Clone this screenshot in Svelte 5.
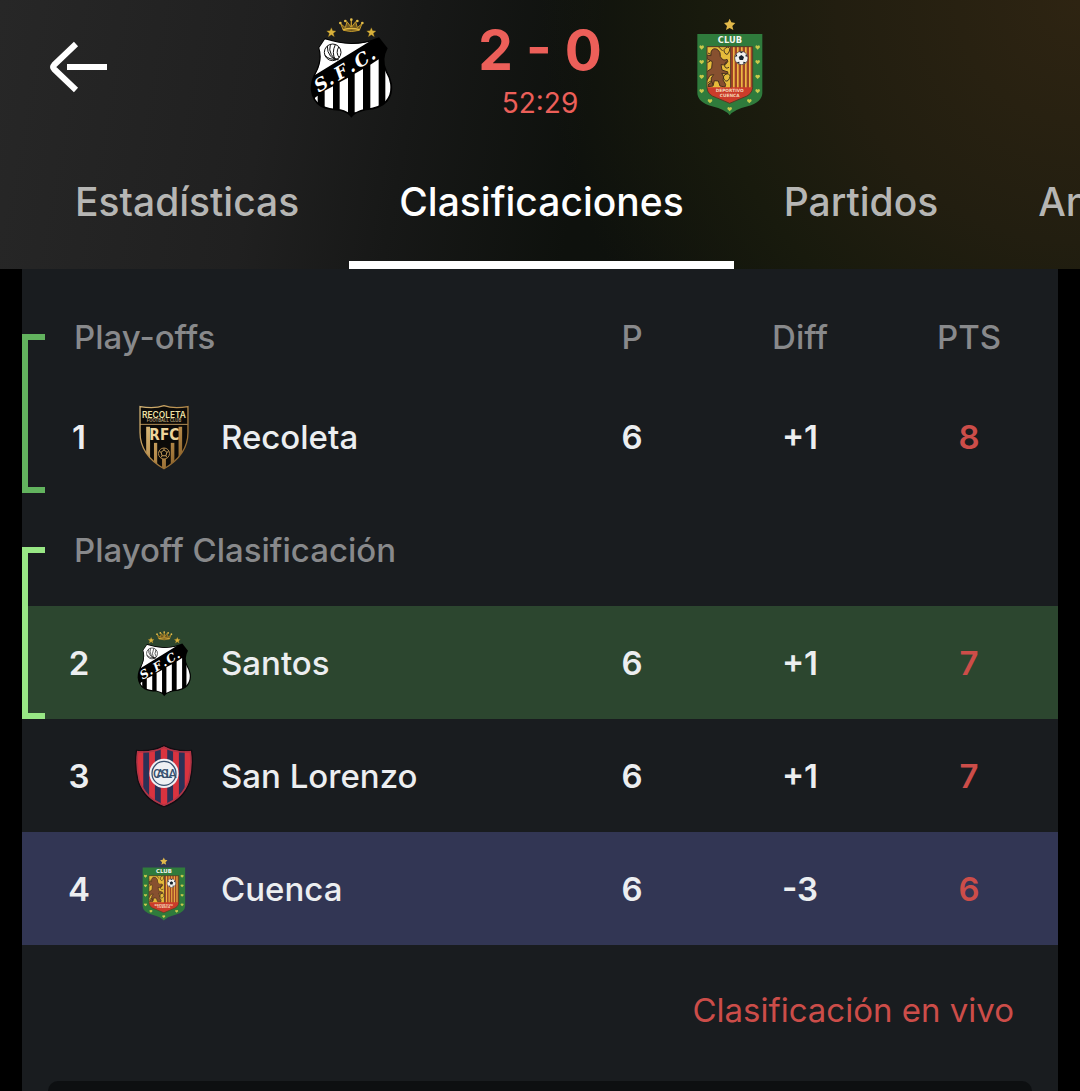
<script>
  const tabs = ['Estadísticas', 'Clasificaciones', 'Partidos', 'Análisis'];
  let active = $state('Clasificaciones');

  const groups = [
    {
      title: 'Play-offs',
      mark: 'direct',
      teams: [{ rank: 1, name: 'Recoleta', crest: 'recoleta', played: 6, diff: '+1', points: 8 }]
    },
    {
      title: 'Playoff Clasificación',
      mark: 'playoff',
      teams: [{ rank: 2, name: 'Santos', crest: 'santos', played: 6, diff: '+1', points: 7, tone: 'home' }]
    },
    {
      teams: [
        { rank: 3, name: 'San Lorenzo', crest: 'lorenzo', played: 6, diff: '+1', points: 7 },
        { rank: 4, name: 'Cuenca', crest: 'cuenca', played: 6, diff: '-3', points: 6, tone: 'away' }
      ]
    }
  ];

  const hearts = [
    [93, 141], [93, 185], [93, 229], [93, 272], [118, 302], [177, 326],
    [236, 302], [261, 272], [261, 229], [261, 185], [261, 141]
  ];
</script>

{#snippet santos(uid)}
  <svg class="crest" viewBox="26 43 312 312" role="img" aria-label="Santos">
    <clipPath id="{uid}-body">
      <path d="M104 116 87 141Q98 175 80 212Q65 238 66 264Q68 298 94 314Q115 324 150 326Q174 331 183 345Q194 331 225 324Q268 320 286 300Q303 280 300 252Q297 232 285 212Q270 176 288 144L265 116Q225 130 183 130Q140 128 104 116Z" />
    </clipPath>
    <g fill="#d9b23c" stroke="#8d6c1c" stroke-width="1">
      <path d="m123 81 4 9 10 1-8 7 3 10-9-6-9 6 3-10-8-7 10-1zM243 81l4 9 10 1-8 7 3 10-9-6-9 6 3-10-8-7 10-1z" />
    </g>
    <path d="m151 69 8 20q24 7 48 0l8-20-14 12-5-18-12 16-1-20-1 20-12-16-5 18z" fill="#6d561f" stroke="#c59a2c" stroke-width="3" stroke-linejoin="round" />
    <g fill="#e3bd4a">
      <circle cx="150" cy="67" r="4" /><circle cx="165" cy="61" r="4" /><circle cx="183" cy="57" r="4" /><circle cx="201" cy="61" r="4" /><circle cx="216" cy="67" r="4" />
    </g>
    <path d="M158 87q25-7 50 0" fill="none" stroke="#e0b640" stroke-width="4" />
    <path d="M104 112 84 141Q94 172 78 208Q60 238 61 265Q64 302 92 319Q112 329 148 330Q172 335 183 351Q195 335 227 329Q272 325 291 303Q309 282 305 250Q301 230 289 209Q274 176 292 143L266 110Q225 127 183 127Q140 125 104 112Z" fill="#000" />
    <g clip-path="url(#{uid}-body)">
      <path d="M104 110Q140 129 185 129Q215 130 240 121L74 223Q99 175 84 141Z" fill="#fff" />
      <path d="M74 291 82 285V330H74zM103 270 128 257V330H103zM148 245 173 231V335H148zM193 219 218 205V335H193zM240 192 265 176V330H240zM285 205 306 205V305H285z" fill="#fff" />
    </g>
    <g fill="none" stroke="#111" stroke-width="3">
      <circle cx="127" cy="155" r="25" fill="#fff" />
      <path d="M111 136q-1 18 10 31t25 8M120 132q-5 16 3 30t20 16M135 132q-12 25 0 45M145 139q-10 18 2 32M104 164q12 14 36 12" />
    </g>
    <text x="0 40 70 114 140 186" transform="translate(85 276) rotate(-31)" fill="#fff" font-family="DejaVu Serif, serif" font-weight="700" font-style="italic" font-size="54">S.F.C.</text>
  </svg>
{/snippet}

{#snippet cuenca(uid)}
  <svg class="crest" viewBox="22 44 312 312" role="img" aria-label="Cuenca">
    <clipPath id="{uid}-inner">
      <path d="M109 139H246V262Q244 284 217 292L177 309 137 292Q110 284 109 262Z" />
    </clipPath>
    <path d="m177 55 5 11 12 2-9 9 3 12-11-6-11 6 3-12-9-9 12-2z" fill="#e2b94a" />
    <path d="M80 101H275V279Q274 306 231 318Q190 328 177 345Q165 328 124 318Q81 306 80 279Z" fill="#2f7b3c" />
    <text x="178" y="127" text-anchor="middle" fill="#f2f5ee" font-family="DejaVu Sans, sans-serif" font-weight="700" font-size="25">CLUB</text>
    <g clip-path="url(#{uid}-inner)">
      <path d="M105 135H180V265H105z" fill="#e6bb3b" />
      <path d="M180 135H250V265H180z" fill="#a04427" />
      <path d="M187 135h5v130h-5zM199 135h5v130h-5zM211 135h5v130h-5zM223 135h5v130h-5zM235 135h5v130h-5z" fill="#edb743" />
      <path d="M121 155q5-14 19-8 11 8 9 22 8 15 20 8 6 5-2 13-9 6-16 3l3 16 18 6-3 6-16-2q10 11 4 20l8 13-2 8-15-3-5-15-12-1-4 16-15 2 2-8 8-5q-4-14 7-23l-11 2-10 17-6-5 4-21 17-12 2-20-15-8-3-12 14 2z" fill="#87502f" stroke="#49301e" stroke-width="3" />
      <path d="M171 140q-16 6-9 17t13-2-4-15zM170 183q-10 4-8 14t13 4M168 220q-15 8-7 18t15-3-8-15zM110 187l9-5M112 158l8 4M112 249q10-16 15 5M143 139l13 13" fill="none" stroke="#42331d" stroke-width="3" />
      <path d="M105 261H250V312H105z" fill="#cb3c2a" />
    </g>
    <path d="M109 139H246V262Q244 284 217 292L177 309 137 292Q110 284 109 262ZM180 139V262" fill="none" stroke="#583b24" stroke-width="3" />
    <g fill="#f3d4b5" font-family="DejaVu Sans, sans-serif" font-weight="700" text-anchor="middle">
      <text x="177" y="276" font-size="13">DEPORTIVO</text>
      <text x="177" y="289" font-size="13">CUENCA</text>
    </g>
    <circle cx="212" cy="173" r="20" fill="#f1f1ee" stroke="#3b2b22" stroke-width="2" />
    <path d="m212 164 8 6-3 9h-10l-3-9zM206 154h12l-6 5zM193 169l5-8 2 7zM231 169l-5-8-2 7zM198 186l8 5 0-7zM226 186l-8 5 0-7z" fill="#17222d" />
    {#each hearts as [x, y]}
      <path transform="translate({x} {y})" d="M0 7-7 0Q-7-6-3-6L0-4 3-6Q7-6 7 0Z" fill="#c7c94c" />
    {/each}
  </svg>
{/snippet}

{#snippet recoleta(uid)}
  <svg class="crest" viewBox="26 35 210 210" role="img" aria-label="Recoleta">
    <linearGradient id="{uid}-gold" x1="0" x2="1" y1="0" y2="1">
      <stop offset="0" stop-color="#d8b878" />
      <stop offset="0.5" stop-color="#b58a4a" />
      <stop offset="1" stop-color="#7d541f" />
    </linearGradient>
    <clipPath id="{uid}-body">
      <path d="M57 46Q101 54 131 43Q161 54 205 46V126Q205 195 131 238Q57 195 57 126Z" />
    </clipPath>
    <g clip-path="url(#{uid}-body)">
      <path d="M50 40H212V240H50z" fill="#0b0a08" />
      <path d="M76 108H88V212H76zM100 158H110V225H100zM125 208H137V240H125zM152 158H163V225H152zM176 108H187V212H176z" fill="url(#{uid}-gold)" />
      <path d="M89 104H174V157H89z" fill="#0b0a08" />
      <path d="M57 101H205" stroke="#b9945a" stroke-width="3" />
    </g>
    <path d="M57 46Q101 54 131 43Q161 54 205 46V126Q205 195 131 238Q57 195 57 126Z" fill="none" stroke="url(#{uid}-gold)" stroke-width="4" />
    <circle cx="131" cy="191" r="17" fill="#0b0a08" stroke="#b58a4a" stroke-width="3" />
    <path d="m131 180 9 7-3 11h-12l-3-11zM131 180v-5M140 187l5-2M137 198l3 5M125 198l-3 5M122 187l-5-2" fill="none" stroke="#c9a15c" stroke-width="3" />
    <g text-anchor="middle">
      <text x="131" y="80" font-family="Inter, sans-serif" font-size="26" font-weight="600" fill="#efe2a6">RECOLETA</text>
      <text x="131" y="95" font-family="Inter, sans-serif" font-size="13" font-weight="600" fill="#b9a37a">FOOTBALL CLUB</text>
      <text x="132" y="150" font-family="DejaVu Sans Condensed, Roboto, sans-serif" font-size="47" font-weight="700" fill="#ecd59c">RFC</text>
    </g>
  </svg>
{/snippet}

{#snippet lorenzo(uid)}
  <svg class="crest" viewBox="26 19 210 210" role="img" aria-label="San Lorenzo">
    <clipPath id="{uid}-body">
      <path d="M49 46Q95 50 131 32Q167 50 213 46Q220 90 208 140Q190 195 131 216Q72 195 54 140Q42 90 49 46Z" />
    </clipPath>
    <g clip-path="url(#{uid}-body)">
      <path d="M40 20H222V225H40z" fill="#2b3156" />
      <path d="M40 20H67V225H40zM85 20H103V225H85zM121 20H141V225H121zM159 20H177V225H159zM195 20H222V225H195z" fill="#d9333f" />
    </g>
    <path d="M46 45Q95 49 131 30Q167 49 216 45Q223 90 211 140Q192 198 131 219Q70 198 51 140Q39 90 46 45Z" fill="none" stroke="#120d12" stroke-width="4" />
    <path d="M50 49Q96 53 131 35Q166 53 212 49Q218 92 207 138Q189 193 131 214Q73 193 55 138Q44 92 50 49Z" fill="none" stroke="#b33445" stroke-width="5" />
    <circle cx="131" cy="116" r="45" fill="#eef0f3" />
    <circle cx="131" cy="116" r="37" fill="none" stroke="#37506f" stroke-width="4" />
    <text x="97 107 122 136 145" y="130" font-family="Roboto, sans-serif" font-weight="500" font-size="38" fill="#37506f">CASLA</text>
  </svg>
{/snippet}

{#snippet crest(name, uid)}
  {#if name === 'santos'}{@render santos(uid)}
  {:else if name === 'cuenca'}{@render cuenca(uid)}
  {:else if name === 'recoleta'}{@render recoleta(uid)}
  {:else}{@render lorenzo(uid)}{/if}
{/snippet}

<div class="page">
  <header>
    <div class="match">
      <button class="back" aria-label="Volver">
        <svg viewBox="0 0 60 54" aria-hidden="true">
          <path d="M27 4 5 25q-2 2 0 4l22 21M18 27H58" />
        </svg>
      </button>
      <div class="badge">{@render santos('top')}</div>
      <div class="score">
        <strong>2 - 0</strong>
        <span>52:29</span>
      </div>
      <div class="badge">{@render cuenca('top')}</div>
    </div>
    <nav>
      {#each tabs as tab}
        <button class="tab" class:active={active === tab} onclick={() => (active = tab)}>{tab}</button>
      {/each}
    </nav>
  </header>

  <main>
    <table>
      <colgroup>
        <col class="c-rank" /><col class="c-crest" /><col /><col class="c-num" /><col class="c-num" /><col class="c-pts" />
      </colgroup>
      {#each groups as group, i}
        <tbody class={group.mark}>
          {#if group.title}
            <tr class="heading" class:first={i === 0}>
              <th class="title" colspan="3">{group.title}</th>
              {#if i === 0}
                <th scope="col">P</th>
                <th scope="col">Diff</th>
                <th scope="col" class="pts">PTS</th>
              {:else}
                <td colspan="3"></td>
              {/if}
            </tr>
          {/if}
          {#each group.teams as team}
            <tr class={team.tone}>
              <td class="rank">{team.rank}</td>
              <td class="emblem">{@render crest(team.crest, 'row' + team.rank)}</td>
              <td class="name">{team.name}</td>
              <td class="num">{team.played}</td>
              <td class="num">{team.diff}</td>
              <td class="num pts live">{team.points}</td>
            </tr>
          {/each}
        </tbody>
      {/each}
    </table>
    <a class="live-link" href="#vivo">Clasificación en vivo</a>
    <div class="panel"></div>
  </main>
</div>

<style>
  :global(body) {
    margin: 0;
    background: #000;
  }

  .page {
    display: flex;
    flex-direction: column;
    min-height: 100vh;
    overflow: hidden;
    font-family: Inter, 'Liberation Sans', sans-serif;
    color: #eceef0;
  }

  button {
    padding: 0;
    border: 0;
    background: none;
    color: inherit;
    font: inherit;
    cursor: pointer;
  }

  header {
    background:
      radial-gradient(ellipse 50% 200% at 100% 0, #2e2412 0%, #221e10 45%, #181a0d 70%, transparent 100%),
      linear-gradient(100deg, #272727 0%, #202020 25%, #171817 38%, #0e110d 54%, #0f120b 100%);
  }

  .match {
    display: grid;
    grid-template-columns: 1fr 104px 275px 104px 1fr;
    align-items: center;
    height: 134px;
  }

  .back {
    justify-self: start;
    margin-left: 49px;
  }

  .back svg {
    display: block;
    width: 60px;
    height: 54px;
    fill: none;
    stroke: #fff;
    stroke-width: 6;
  }

  .badge {
    height: 104px;
  }

  .crest {
    display: block;
    width: 100%;
    height: 100%;
  }

  .score {
    display: flex;
    flex-direction: column;
    align-items: center;
    padding-top: 14px;
    color: #ec5f59;
  }

  .score strong {
    font-size: 55px;
    font-weight: 700;
    line-height: 58px;
  }

  .score span {
    font-size: 28px;
    line-height: 48px;
  }

  nav {
    display: flex;
    height: 135px;
    padding-left: 25px;
  }

  .tab {
    flex: none;
    padding: 8px 50px 0;
    border-bottom: 8px solid transparent;
    color: #b6b6b4;
    font-size: 39px;
    font-weight: 500;
  }

  .tab.active {
    border-color: #fff;
    color: #fff;
  }

  main {
    display: flex;
    flex: 1;
    flex-direction: column;
    margin: 0 22px;
    padding-top: 11px;
    background: #191c1f;
    font-size: 33px;
  }

  table {
    width: 100%;
    table-layout: fixed;
    border-collapse: collapse;
    font-weight: 500;
  }

  .c-rank { width: 108px; }
  .c-crest { width: 68px; }
  .c-num { width: 168px; }
  .c-pts { width: 174px; }

  tr {
    height: 113px;
  }

  th,
  td {
    padding: 0;
    font-weight: 500;
    text-align: center;
  }

  .heading {
    color: #88898b;
  }

  .heading.first {
    height: 100px;
  }

  .heading.first th {
    padding-top: 14px;
  }

  .heading .title {
    padding-left: 52px;
    text-align: left;
  }

  tbody {
    position: relative;
  }

  .direct::before,
  .playoff::before {
    content: '';
    position: absolute;
    top: 54px;
    bottom: 0;
    left: 0;
    width: 17px;
    border: 6px solid #62b35e;
    border-right: 0;
  }

  .playoff::before {
    border-color: #98e785;
  }

  .home {
    background: #2c462f;
  }

  .away {
    background: #323654;
  }

  .rank,
  .num {
    font-weight: 600;
  }

  td.rank {
    padding-left: 6px;
  }

  .emblem .crest {
    width: 68px;
    height: 70px;
  }

  td.name {
    padding-left: 23px;
    text-align: left;
  }

  th.pts,
  td.pts {
    padding-right: 4px;
  }

  .live {
    color: #cc4d49;
  }

  .live-link {
    align-self: flex-end;
    padding: 40px 44px;
    color: #cc4d49;
    line-height: 50px;
    text-decoration: none;
  }

  .panel {
    flex: 1;
    min-height: 10px;
    margin: 6px 26px 0;
    border-radius: 24px 24px 0 0;
    background: #0d0f11;
  }
</style>
